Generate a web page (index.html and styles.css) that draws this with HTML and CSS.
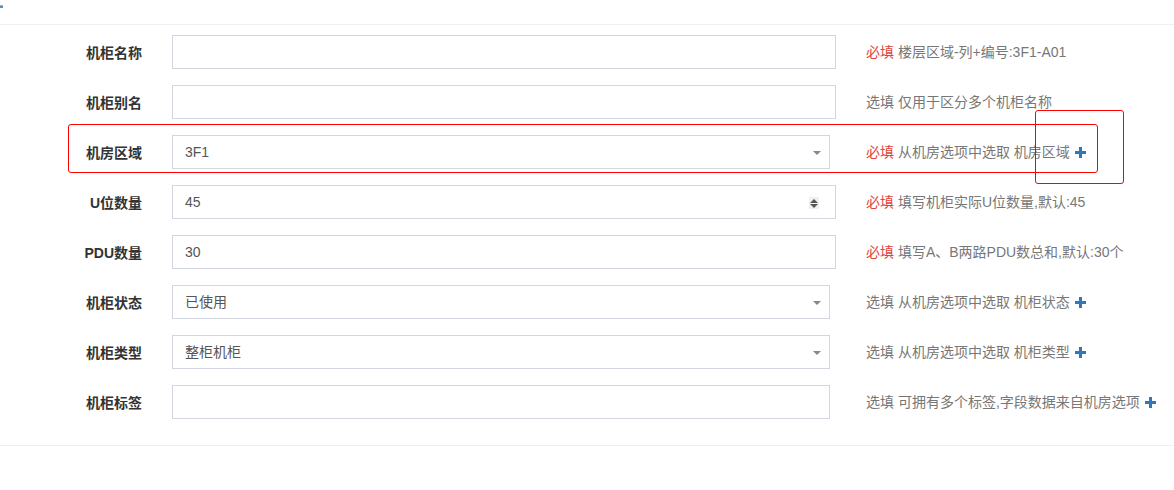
FILE: index.html
```html
<!DOCTYPE html>
<html lang="zh-CN">
<head>
    <meta charset="UTF-8">
    <meta name="viewport" content="width=device-width, initial-scale=1.0">
    <title>机柜信息</title>
    <link rel="stylesheet" href="styles.css">
</head>
<body>
    <div class="topbar"><span class="dot"></span></div>

    <form class="cabinet-form">
        <div class="row">
            <label class="lbl">机柜名称</label>
            <div class="ctrl"><input type="text" class="ipt"></div>
            <p class="help"><span class="must">必填</span> 楼层区域-列+编号:3F1-A01</p>
        </div>
        <div class="row">
            <label class="lbl">机柜别名</label>
            <div class="ctrl"><input type="text" class="ipt"></div>
            <p class="help">选填 仅用于区分多个机柜名称</p>
        </div>
        <div class="row">
            <label class="lbl">机房区域</label>
            <div class="ctrl short sel"><div class="ipt">3F1</div></div>
            <p class="help"><span class="must">必填</span> 从机房选项中选取 机房区域 <span class="plus"></span></p>
        </div>
        <div class="row">
            <label class="lbl">U位数量</label>
            <div class="ctrl num"><input type="text" class="ipt" value="45"><span class="spin"></span></div>
            <p class="help"><span class="must">必填</span> 填写机柜实际U位数量,默认:45</p>
        </div>
        <div class="row">
            <label class="lbl">PDU数量</label>
            <div class="ctrl"><input type="text" class="ipt" value="30"></div>
            <p class="help"><span class="must">必填</span> 填写A、B两路PDU数总和,默认:30个</p>
        </div>
        <div class="row">
            <label class="lbl">机柜状态</label>
            <div class="ctrl short sel"><div class="ipt">已使用</div></div>
            <p class="help">选填 从机房选项中选取 机柜状态 <span class="plus"></span></p>
        </div>
        <div class="row">
            <label class="lbl">机柜类型</label>
            <div class="ctrl short sel"><div class="ipt">整柜机柜</div></div>
            <p class="help">选填 从机房选项中选取 机柜类型 <span class="plus"></span></p>
        </div>
        <div class="row">
            <label class="lbl">机柜标签</label>
            <div class="ctrl short"><input type="text" class="ipt"></div>
            <p class="help">选填 可拥有多个标签,字段数据来自机房选项 <span class="plus"></span></p>
        </div>
    </form>

    <!-- 标注框 -->
    <div class="mark mark1"></div>
    <div class="mark mark2"></div>
</body>
</html>
```

FILE: styles.css
```css
*{margin: 0;padding: 0;box-sizing: border-box;}
body{background: #fff;font-family: "Liberation Sans", "Noto Sans CJK SC", sans-serif;font-size: 14px;color: #333;position: relative;}

.topbar{height: 25px;border-bottom: 1px solid #f0f0f0;position: relative;}
.dot{position: absolute;left: 0;top: 5px;width: 3px;height: 3px;background: #5b8fc7;border-top: 1px solid #e8a23c;}

.cabinet-form{padding: 10px 0 26px;border-bottom: 1px solid #f0f0f0;}
.row{display: grid;grid-template-columns: 142px 664px 1fr;column-gap: 30px;align-items: center;height: 34px;margin-bottom: 16px;}
.row:last-child{margin-bottom: 0;}

.lbl{text-align: right;font-weight: bold;font-size: 14px;color: #333;margin-top: -1px;}

.ctrl{position: relative;height: 34px;}
.ctrl.short{width: 658px;}
.ipt{display: block;width: 100%;height: 34px;border: 1px solid #d2d6de;padding: 0 12px;font: inherit;font-size: 14px;color: #555;line-height: 32px;outline: none;background: #fff;}

.sel::after{content: "";position: absolute;right: 9px;top: 16px;border-left: 4px solid transparent;border-right: 4px solid transparent;border-top: 4px solid #888;}

.spin{position: absolute;left: 637px;top: 12px;width: 10px;height: 12px;background: #efefef;}
.spin::before{content: "";position: absolute;left: 1px;top: 2px;border-left: 4px solid transparent;border-right: 4px solid transparent;border-bottom: 4px solid #555;}
.spin::after{content: "";position: absolute;left: 1px;top: 7px;border-left: 4px solid transparent;border-right: 4px solid transparent;border-top: 4px solid #555;}

.help{font-size: 14px;color: #777;white-space: nowrap;margin-top: -3px;}
.must{color: #e0453b;}
.plus{display: inline-block;width: 11px;height: 11px;position: relative;vertical-align: -1px;margin-left: 1px;}
.plus::before{content: "";position: absolute;left: 4px;top: 0;width: 3px;height: 11px;background: #2f78bd;}
.plus::after{content: "";position: absolute;left: 0;top: 4px;width: 11px;height: 3px;background: #2f78bd;}

.mark{position: absolute;border: 1px solid #f00;border-radius: 3px;}
.mark1{left: 68px;top: 124px;width: 1030px;height: 49px;}
.mark2{left: 1035px;top: 110px;width: 89px;height: 74px;}
```
